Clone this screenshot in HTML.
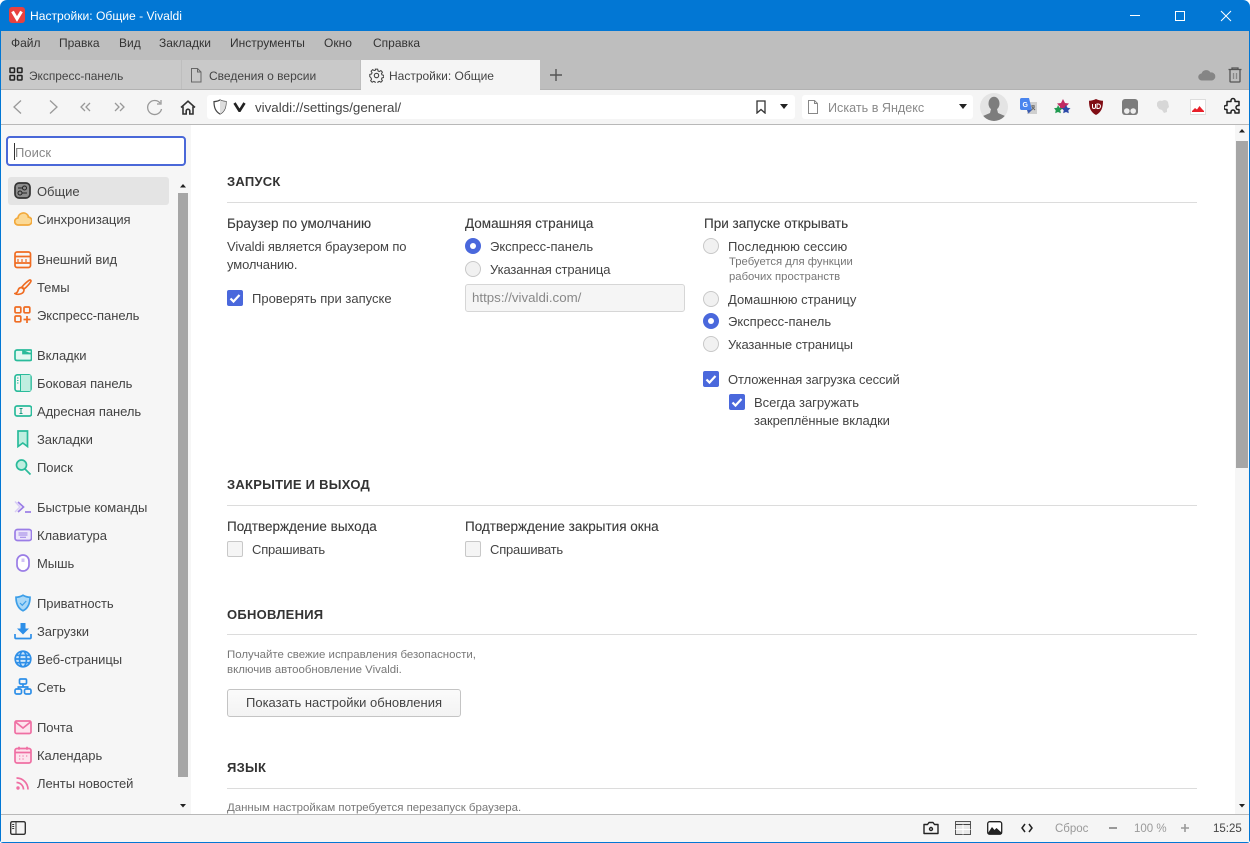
<!DOCTYPE html>
<html lang="ru"><head><meta charset="utf-8"><title>Настройки: Общие - Vivaldi</title>
<style>
html,body{margin:0;padding:0;width:1250px;height:843px;overflow:hidden;background:#fff}
body{position:relative;font-family:"Liberation Sans","Noto Sans CJK SC",sans-serif;font-size:13px;color:#3a3a3a}
div,span,svg{position:absolute}
.t{white-space:nowrap;line-height:20px;height:20px}
.m{color:#333;font-size:12px;top:33px}
.n{left:37px;color:#444;font-size:13px;letter-spacing:-.05px}
.h{left:227px;font-weight:bold;font-size:13px;color:#333;letter-spacing:.25px}
.b{font-weight:normal;color:#3a3a3a;font-size:13.500px;-webkit-text-stroke:.1px #3a3a3a}
.x{letter-spacing:-.1px}
.s{color:#777;font-size:11.300px}
.w{font-size:11.450px}
.l{height:1px;left:227px;width:970px;background:#dcdcdc}
.r{width:16px;height:16px;border-radius:50%;background:#f1f1f1;border:1px solid #c8c8c8;box-sizing:border-box}
.r.on{background:#4a68dc;border:0}
.r.on:after{content:"";position:absolute;left:5px;top:5px;width:6px;height:6px;border-radius:50%;background:#fff}
.c{width:16px;height:16px;border-radius:2px;background:#4a68dc}
.c svg{left:0;top:0}
.u{width:16px;height:16px;border-radius:2px;background:#f5f5f5;border:1px solid #c8c8c8;box-sizing:border-box}
.i{width:18px;height:18px;left:14px;fill:none;stroke-width:1.700}
</style></head><body>

<!-- window frame -->
<div style="left:0;top:0;width:1250px;height:843px;background:#0277d4;border-radius:7px 7px 3px 3px"></div>
<!-- menu bar + tab strip -->
<div style="left:1px;top:31px;width:1248px;height:59px;background:#bebebe"></div>
<!-- title -->
<svg style="left:9px;top:7px" width="16" height="16" viewBox="0 0 16 16"><rect width="16" height="16" rx="3" fill="#e8413f"/><path d="M3.500 4.500 8 12l4.500-7.500" fill="none" stroke="#fff" stroke-width="3"/></svg>
<span class="t" style="left:30px;top:6px;color:#fff;font-size:12.100px">Настройки: Общие - Vivaldi</span>
<svg style="left:1125px;top:8px" width="120" height="16" fill="none" stroke="#fff" stroke-width="1"><path d="M5 7.500H15M50.500 3.500h9v9h-9zM96 3l10 10M106 3 96 13"/></svg>

<span class="t m" style="left:11px">Файл</span>
<span class="t m" style="left:59px">Правка</span>
<span class="t m" style="left:119px">Вид</span>
<span class="t m" style="left:159px">Закладки</span>
<span class="t m" style="left:230px">Инструменты</span>
<span class="t m" style="left:324px">Окно</span>
<span class="t m" style="left:373px">Справка</span>

<!-- tabs -->
<div style="left:1px;top:60px;width:180px;height:29px;background:#c9c9c9"></div>
<div style="left:182px;top:60px;width:178px;height:29px;background:#c9c9c9"></div>
<div style="left:361px;top:60px;width:179px;height:30px;background:#f5f5f5"></div>
<div style="left:1px;top:89px;width:1248px;height:1px;background:#b2b2b2"></div>
<div style="left:361px;top:89px;width:179px;height:1px;background:#f5f5f5"></div>
<svg style="left:9px;top:67px" width="14" height="14" fill="none" stroke="#222" stroke-width="1.500"><rect x="1" y="1" width="4.500" height="4.500" rx=".6"/><rect x="8.500" y="1" width="4.500" height="4.500" rx=".6"/><rect x="1" y="8.500" width="4.500" height="4.500" rx=".6"/><rect x="8.500" y="8.500" width="4.500" height="4.500" rx=".6"/></svg>
<span class="t" style="left:29px;top:66px;font-size:11.900px;color:#444">Экспресс-панель</span>
<svg style="left:190px;top:68px" width="12" height="15" fill="none" stroke="#666"><path d="M1.500.5h6l3.500 3.500v10h-9.500zM7.500.5V4H11"/></svg>
<span class="t" style="left:209px;top:66px;font-size:12px;color:#444">Сведения о версии</span>
<svg style="left:369px;top:68px" width="15" height="15" viewBox="0 0 15 15" fill="none" stroke="#444" stroke-width="1.100"><circle cx="7.500" cy="7.500" r="2.200"/><path d="M6.300 1h2.400l.4 1.900 1.300.6 1.700-1 1.600 1.700-1 1.600.6 1.300 1.800.4v2.300l-1.800.4-.6 1.300 1 1.600-1.600 1.700-1.700-1-1.300.6-.4 1.800H6.300l-.4-1.800-1.300-.6-1.700 1-1.600-1.700 1-1.600-.6-1.300L.4 8.800V6.500l1.800-.4.6-1.300-1-1.600 1.600-1.700 1.700 1 1.300-.6z" transform="translate(.4 .2) scale(.95)"/></svg>
<span class="t" style="left:389px;top:66px;font-size:12px;color:#444">Настройки: Общие</span>
<svg style="left:549px;top:68px" width="14" height="14" stroke="#555" stroke-width="1.400"><path d="M7 1v12M1 7h12"/></svg>
<svg style="left:1198px;top:69px" width="18" height="12" viewBox="0 0 18 12"><path d="M4 11.500a3.500 3.500 0 0 1-.5-7A5 5 0 0 1 12.500 3.500 4 4 0 0 1 14 11.500z" fill="#858585"/></svg>
<svg style="left:1228px;top:67px" width="14" height="16" viewBox="0 0 14 16" fill="none" stroke="#555" stroke-width="1.300"><path d="M.5 2.500h13M4 2.500V1h6v1.500M2 3v11.300c0 .5.300.7.700.7h8.600c.4 0 .7-.2.700-.7V3"/><path d="M5.500 6v6M8.500 6v6" stroke="#888"/></svg>

<!-- toolbar -->
<div style="left:1px;top:90px;width:1248px;height:34px;background:#f5f5f5"></div>
<div style="left:1px;top:124px;width:1248px;height:1px;background:#b8b8b8"></div>
<svg style="left:10px;top:97px" width="170" height="20" fill="none" stroke="#999" stroke-width="1.300"><path d="M11 3.500 4 10l7 6.500M40 3.500l7 6.500-7 6.500"/><path d="M75 6l-4 4 4 4M80 6l-4 4 4 4M105 6l4 4-4 4M110 6l4 4-4 4"/><path d="M150 6a7 7 0 1 0 1.500 6M151 3v4h-4"/></svg>
<svg style="left:180px;top:100px" width="16" height="15" viewBox="0 0 16 15" fill="none" stroke="#333" stroke-width="1.600"><path d="M1 7.500 8 1.200l7 6.300M3 6.500v7.500h3.200v-3a1.800 1.800 0 0 1 3.600 0v3H13V6.500"/></svg>
<div style="left:207px;top:95px;width:588px;height:24px;background:#fff;border-radius:3px"></div>
<svg style="left:213px;top:99px" width="14" height="16" fill="none" stroke="#444" stroke-width="1.200"><path d="M7 1c2 1.200 4 1.600 6 1.600 0 6-1.500 9.800-6 12.400C2.500 12.400 1 8.600 1 2.600 3 2.600 5 2.200 7 1z"/><path d="M7 1c2 1.200 4 1.600 6 1.600 0 6-1.500 9.800-6 12.400z" fill="#ddd" stroke="none"/></svg>
<svg style="left:233px;top:102px" width="13" height="10"><path d="M1.500 1 6.500 9l5-8" fill="none" stroke="#222" stroke-width="2.600"/></svg>
<span class="t" style="left:255px;top:98px;color:#444;font-size:13.350px">vivaldi://settings/general/</span>
<svg style="left:756px;top:100px" width="10" height="14" fill="none" stroke="#333" stroke-width="1.300"><path d="M1 1h8v12L5 9.500 1 13z"/></svg>
<svg style="left:779px;top:104px" width="10" height="6"><path d="M1 0h8L5 5z" fill="#222"/></svg>
<div style="left:802px;top:95px;width:171px;height:24px;background:#fff;border-radius:3px"></div>
<svg style="left:807px;top:100px" width="12" height="15" fill="none" stroke="#888"><path d="M1.500.5h6l3 3v10h-9zM7.500.5v3h3"/></svg>
<span class="t" style="left:828px;top:98px;color:#8a8a8a;font-size:12.600px">Искать в Яндекс</span>
<svg style="left:958px;top:104px" width="10" height="6"><path d="M1 0h8L5 5z" fill="#222"/></svg>
<!-- avatar -->
<div style="left:980px;top:93px;width:28px;height:28px;border-radius:50%;background:#e4e4e4;overflow:hidden">
<svg style="left:0;top:0" width="28" height="28" viewBox="0 0 28 28"><ellipse cx="14" cy="10.500" rx="5.500" ry="6.800" fill="#7d7d7d"/><path d="M11 16h6l1 4 7 3v5H3v-5l7-3z" fill="#7d7d7d"/></svg></div>
<!-- extensions -->
<svg style="left:1020px;top:98px" width="17" height="18" viewBox="0 0 17 18"><rect x="7" y="4" width="10" height="12" fill="#cfcfcf"/><path d="M0 1.500C0 .7.700 0 1.500 0H9l3 12H1.500C.7 12 0 11.300 0 10.500z" fill="#4a85ee"/><path d="M7 12h5l-3.500 3.500z" fill="#3a5bb0"/><text x="2.500" y="9" font-size="7" font-weight="bold" fill="#fff" font-family="Liberation Sans">G</text><path d="M11 8h4M13 7v1M11.500 12l3-3M12 9l3 3" stroke="#666" fill="none"/></svg>
<svg style="left:1054px;top:99px" width="17" height="17" viewBox="0 0 17 17"><path d="M9 0l2 4 4 .5-3 3 .7 4L9 9.500 5.300 11.500 6 7.500 3 4.500 7 4z" fill="#c02a62"/><path d="M4 6l1.500 2.800 3 .4-2.200 2.100.5 3L4 13l-2.800 1.300.5-3L0 9.200l3-.4z" fill="#1f9a50"/><path d="M12 6l1.500 2.800 3 .4-2.200 2.100.5 3L12 13l-2.800 1.300.5-3L7.500 9.200l3-.4z" fill="#2c4aa8"/></svg>
<svg style="left:1089px;top:99px" width="14" height="16" viewBox="0 0 14 16"><path d="M7 0c2.300 1.200 4.500 1.700 7 1.700 0 7-1.500 11.300-7 14.300C1.500 13 0 8.700 0 1.700 2.500 1.700 4.700 1.200 7 0z" fill="#800d14"/><path d="M3.500 5v3a1.500 1.500 0 0 0 3 0V5M8 5v4.500h1.200a2.200 2.200 0 0 0 0-4.500z" fill="none" stroke="#fff" stroke-width="1"/></svg>
<svg style="left:1122px;top:99px" width="16" height="16" viewBox="0 0 16 16"><rect width="16" height="16" rx="3" fill="#7c7c7c"/><circle cx="4.800" cy="12" r="2.800" fill="#eee"/><circle cx="11.200" cy="12" r="2.800" fill="#eee"/></svg>
<svg style="left:1156px;top:99px" width="15" height="15" viewBox="0 0 15 15"><path d="M1 4c1-2 3-3 5-2 2-1.500 5-1 6 1l1 5-2 2 0 3-3 1-2-3-3-1-2-3z" fill="#d7d7d7"/></svg>
<svg style="left:1190px;top:99px" width="16" height="16" viewBox="0 0 16 16"><rect x=".5" y=".5" width="15" height="15" fill="#fff" stroke="#ddd"/><path d="M2 12l3-3 2 1.500L9.500 7l2.500 3 2 2z" fill="#e8202a"/><rect x="2" y="12" width="12" height="1" fill="#e8202a"/></svg>
<svg style="left:1224px;top:97px" width="18" height="18" viewBox="0 0 18 18" fill="none" stroke="#222" stroke-width="1.500"><path d="M7 3.500a2 2 0 0 1 4 0l0 1h4v4h-1a2 2 0 0 0 0 4h1V16h-4v-1a2 2 0 0 0-4 0v1H3v-3.500H2a2 2 0 0 1 0-4h1V4.500h4z" stroke-linejoin="round"/></svg>

<!-- body areas -->
<div style="left:1px;top:125px;width:190px;height:689px;background:#f6f6f6"></div>
<div style="left:191px;top:125px;width:1044px;height:689px;background:#fff"></div>
<div style="left:1235px;top:125px;width:14px;height:689px;background:#f6f6f6"></div>

<!-- sidebar search -->
<div style="left:6px;top:136px;width:180px;height:30px;box-sizing:border-box;border:2px solid #4a68d8;border-radius:4px;background:#fff"></div>
<div style="left:14px;top:143px;width:1px;height:17px;background:#333"></div>
<span class="t" style="left:15px;top:143px;color:#888;font-size:13px">Поиск</span>

<!-- sidebar scrollbar -->
<div style="left:178px;top:193px;width:10px;height:584px;background:#a6a6a6"></div>
<svg style="left:178px;top:183px" width="10" height="6"><path d="M2 4.500h6L5 1z" fill="#222"/></svg>
<svg style="left:178px;top:803px" width="10" height="6"><path d="M2 1h6L5 4.500z" fill="#222"/></svg>

<!-- selected -->
<div style="left:8px;top:177px;width:161px;height:28px;background:#e4e4e4;border-radius:3px"></div>

<!-- icons -->
<svg class="i" style="top:182px" viewBox="0 0 18 18"><rect x="1" y="1" width="15" height="15" rx="4" fill="#8d8d8d" stroke="#333"/><circle cx="10.500" cy="6" r="2" stroke="#222" stroke-width="1"/><circle cx="6" cy="11" r="2" stroke="#222" stroke-width="1"/><path d="M4 6h4.500M8 11h5" stroke="#222" stroke-width="1"/></svg>
<svg class="i" style="top:210px" viewBox="0 0 18 18"><path d="M4.500 15a3.500 3.500 0 0 1-.6-7A5.500 5.500 0 0 1 14 5.500c.2.700.3 1 .3 1.500A4 4 0 0 1 13.500 15z" fill="#fbd996" stroke="#f2a93c"/></svg>
<svg class="i" style="top:251px" viewBox="0 0 18 18" stroke="#ef6c22"><rect x="1" y="1" width="15.500" height="15.500" rx="2"/><path d="M1 5.500h15.500M1 12h15.500"/><path d="M4 8v3M8 8v3M12 8v3" stroke-width="1.200"/></svg>
<svg class="i" style="top:278px" viewBox="0 0 18 18" stroke="#ef6c22"><path d="M16 2c-1 0-6 4-8 7l2 2c3-2 7-7 7-8 0-.6-.5-1-1-1z"/><path d="M7.500 9.500c-2 0-3 1-3.500 3-.3 1.500-1.500 2.500-3 3 2 1.300 5.500 1 7.500-.5 1.500-1.300 1.800-3.300 1-4z"/></svg>
<svg class="i" style="top:306px" viewBox="0 0 18 18" stroke="#ef6c22" stroke-width="1.900"><rect x="1" y="1" width="5.800" height="5.800" rx="1.200"/><rect x="10" y="1" width="5.800" height="5.800" rx="1.200"/><rect x="1" y="10" width="5.800" height="5.800" rx="1.200"/><path d="M13 10v7M9.500 13.500h7"/></svg>
<svg class="i" style="top:346px" viewBox="0 0 18 18" stroke="#2abb9b"><path d="M1 6c0-1 .7-2 2-2h13.500c.7 0 1 .4 1 1v8c0 1-.7 1.500-1.500 1.500H3c-1.200 0-2-.7-2-2z" fill="#e3f8f2"/><path d="M9 4v3.500h8.500" fill="#2abb9b"/></svg>
<svg class="i" style="top:374px" viewBox="0 0 18 18" stroke="#2abb9b"><rect x="1" y=".8" width="16" height="16.400" rx="2.500"/><rect x="6.500" y="1" width="10" height="16" fill="#bfeee0" stroke="none"/><path d="M6.500 1v16M3 4h1.500M3 6.500h1.500M3 9h1.500" stroke-width="1"/></svg>
<svg class="i" style="top:402px" viewBox="0 0 18 18" stroke="#2abb9b"><rect x="1" y="4" width="16.500" height="10" rx="2"/><path d="M5.500 6.500h3M5.500 11.500h3M7 6.500v5" stroke-width="1" stroke="#1d9a80"/></svg>
<svg class="i" style="top:430px" viewBox="0 0 18 18" stroke="#2abb9b"><path d="M4 1h9.500v15.500L8.800 13 4 16.500z" fill="#bfeee0"/></svg>
<svg class="i" style="top:458px" viewBox="0 0 18 18" stroke="#2abb9b" stroke-width="1.700"><circle cx="7.500" cy="7" r="5" fill="#bfeee0"/><path d="M11 11l5.500 5.500"/></svg>
<svg class="i" style="top:498px" viewBox="0 0 18 18" stroke="#9a7de6"><path d="M1 3.500 6 9 1 14" stroke="#d8ccf6" stroke-width="1.500"/><path d="M4 4l5.500 5L4 14"/><path d="M11 14h6"/></svg>
<svg class="i" style="top:526px" viewBox="0 0 18 18" stroke="#9a7de6"><rect x="1" y="3.500" width="16.500" height="11" rx="2.500" fill="#ece6fb"/><path d="M4.500 7h9M4.500 9h9M6 11.300h6" stroke-width="1"/></svg>
<svg class="i" style="top:554px" viewBox="0 0 18 18" stroke="#9a7de6"><rect x="3" y="1" width="12" height="16" rx="6" fill="#fff"/><path d="M9 4.500v3.500" stroke="#d0c2f4" stroke-width="3"/></svg>
<svg class="i" style="top:594px" viewBox="0 0 18 18" stroke="#3c9ee8"><path d="M9 1.200c2.500 1.400 5 2 7 2 0 6.700-2 11-7 13.600C4 14.200 2 9.900 2 3.200c2 0 4.500-.6 7-2z" fill="#a9d8f7"/><path d="M6 9l2.300 2.300L12.200 7" stroke-width="1.200"/></svg>
<svg class="i" style="top:622px" viewBox="0 0 18 18" stroke="#2e8fe8" stroke-width="1.600"><path d="M6.500 1h5v5.500H15L9 12.500 3 6.500h3.500z" fill="#2e8fe8" stroke="none"/><path d="M1 12v3.500c0 .6.400 1 1 1h14c.6 0 1-.4 1-1V12"/></svg>
<svg class="i" style="top:650px" viewBox="0 0 18 18" stroke="#2e8fe8" stroke-width="1.200"><circle cx="9" cy="9" r="7.800" fill="#cfe7fb"/><ellipse cx="9" cy="9" rx="3.500" ry="7.800"/><path d="M1.200 9h15.600M2.300 5.300h13.400M2.300 12.700h13.400"/></svg>
<svg class="i" style="top:678px" viewBox="0 0 18 18" stroke="#2e8fe8" stroke-width="1.400"><rect x="5.500" y="1" width="7" height="5" rx="1.200"/><rect x="1" y="11" width="6.500" height="5" rx="1.500"/><rect x="10.500" y="11" width="6.500" height="5" rx="1.500"/><path d="M9 6v3M4.300 11V9h9.400v2"/></svg>
<svg class="i" style="top:718px" viewBox="0 0 18 18" stroke="#ef6fa3" stroke-width="1.500"><rect x="1" y="3" width="16" height="12.500" rx="1.500" fill="#fde4ee"/><path d="M1.500 4l7.500 6 7.500-6"/></svg>
<svg class="i" style="top:746px" viewBox="0 0 18 18" stroke="#ef6fa3" stroke-width="1.500"><rect x="1" y="2.500" width="16" height="14.500" rx="2" fill="#fde4ee"/><path d="M1 6.500h16M5 .8v3M13 .8v3"/><path d="M5 10h1.300M8.400 10h1.300M12 10h1.300M5 13h1.300M8.400 13h1.300" stroke-width="1"/></svg>
<svg class="i" style="top:774px" viewBox="0 0 18 18" stroke="#ef6fa3" stroke-width="1.700"><circle cx="4" cy="14" r="1.700" fill="#ef6fa3" stroke="none"/><path d="M2.500 8.500a7 7 0 0 1 7 7M2.500 4a11.500 11.500 0 0 1 11.500 11.500" /></svg>

<!-- nav labels -->
<span class="t n" style="top:182px">Общие</span>
<span class="t n" style="top:210px">Синхронизация</span>
<span class="t n" style="top:250px">Внешний вид</span>
<span class="t n" style="top:278px">Темы</span>
<span class="t n" style="top:306px">Экспресс-панель</span>
<span class="t n" style="top:346px">Вкладки</span>
<span class="t n" style="top:374px">Боковая панель</span>
<span class="t n" style="top:402px">Адресная панель</span>
<span class="t n" style="top:430px">Закладки</span>
<span class="t n" style="top:458px">Поиск</span>
<span class="t n" style="top:498px">Быстрые команды</span>
<span class="t n" style="top:526px">Клавиатура</span>
<span class="t n" style="top:554px">Мышь</span>
<span class="t n" style="top:594px">Приватность</span>
<span class="t n" style="top:622px">Загрузки</span>
<span class="t n" style="top:650px">Веб-страницы</span>
<span class="t n" style="top:678px">Сеть</span>
<span class="t n" style="top:718px">Почта</span>
<span class="t n" style="top:746px">Календарь</span>
<span class="t n" style="top:774px">Ленты новостей</span>

<!-- content scrollbar -->
<svg style="left:1237px;top:128px" width="10" height="6"><path d="M2 4.500h6L5 1z" fill="#222"/></svg>
<div style="left:1236px;top:141px;width:12px;height:327px;background:#a6a6a6"></div>
<svg style="left:1237px;top:803px" width="10" height="6"><path d="M2 1h6L5 4.500z" fill="#222"/></svg>

<!-- section: запуск -->
<span class="t h" style="top:172px">ЗАПУСК</span>
<div class="l" style="top:202px"></div>
<span class="t b" style="left:227px;top:214px">Браузер по умолчанию</span>
<span class="t x" style="left:227px;top:237px;color:#444">Vivaldi является браузером по</span>
<span class="t x" style="left:227px;top:255px;color:#444">умолчанию.</span>
<div class="c" style="left:227px;top:290px"><svg width="16" height="16" fill="none" stroke="#fff" stroke-width="2.200"><path d="M3.500 8.500 6.500 11.500 12.500 5"/></svg></div>
<span class="t" style="left:252px;top:289px;color:#444">Проверять при запуске</span>

<span class="t b" style="left:465px;top:214px">Домашняя страница</span>
<div class="r on" style="left:465px;top:238px"></div>
<span class="t" style="left:490px;top:237px;color:#444">Экспресс-панель</span>
<div class="r" style="left:465px;top:261px"></div>
<span class="t x" style="left:490px;top:260px;color:#444">Указанная страница</span>
<div style="left:465px;top:284px;width:220px;height:28px;box-sizing:border-box;border:1px solid #d6d6d6;border-radius:3px;background:#f5f5f5"></div>
<span class="t" style="left:472px;top:288px;color:#888;font-size:13.300px">https://vivaldi.com/</span>

<span class="t b" style="left:704px;top:214px">При запуске открывать</span>
<div class="r" style="left:703px;top:238px"></div>
<span class="t" style="left:728px;top:237px;color:#444">Последнюю сессию</span>
<span class="t s" style="left:729px;top:252px">Требуется для функции</span>
<span class="t s" style="left:729px;top:267px">рабочих пространств</span>
<div class="r" style="left:703px;top:291px"></div>
<span class="t" style="left:728px;top:290px;color:#444">Домашнюю страницу</span>
<div class="r on" style="left:703px;top:313px"></div>
<span class="t" style="left:728px;top:312px;color:#444">Экспресс-панель</span>
<div class="r" style="left:703px;top:336px"></div>
<span class="t x" style="left:728px;top:335px;color:#444">Указанные страницы</span>
<div class="c" style="left:703px;top:371px"><svg width="16" height="16" fill="none" stroke="#fff" stroke-width="2.200"><path d="M3.500 8.500 6.500 11.500 12.500 5"/></svg></div>
<span class="t x" style="left:728px;top:370px;color:#444">Отложенная загрузка сессий</span>
<div class="c" style="left:729px;top:394px"><svg width="16" height="16" fill="none" stroke="#fff" stroke-width="2.200"><path d="M3.500 8.500 6.500 11.500 12.500 5"/></svg></div>
<span class="t" style="left:754px;top:393px;color:#444">Всегда загружать</span>
<span class="t x" style="left:754px;top:411px;color:#444">закреплённые вкладки</span>

<!-- section: закрытие -->
<span class="t h" style="top:475px">ЗАКРЫТИЕ И ВЫХОД</span>
<div class="l" style="top:505px"></div>
<span class="t b" style="left:227px;top:517px">Подтверждение выхода</span>
<div class="u" style="left:227px;top:541px"></div>
<span class="t x" style="left:252px;top:540px;color:#444;letter-spacing:-.2px">Спрашивать</span>
<span class="t b" style="left:465px;top:517px">Подтверждение закрытия окна</span>
<div class="u" style="left:465px;top:541px"></div>
<span class="t x" style="left:490px;top:540px;color:#444;letter-spacing:-.2px">Спрашивать</span>

<!-- section: обновления -->
<span class="t h" style="top:605px">ОБНОВЛЕНИЯ</span>
<div class="l" style="top:634px"></div>
<span class="t s w" style="left:227px;top:645px">Получайте свежие исправления безопасности,</span>
<span class="t s w" style="left:227px;top:660px">включив автообновление Vivaldi.</span>
<div style="left:227px;top:689px;width:234px;height:28px;box-sizing:border-box;border:1px solid #c4c4c4;border-radius:3px;background:linear-gradient(#fbfbfb,#f3f3f3)"></div>
<span class="t" style="left:246px;top:693px;color:#444">Показать настройки обновления</span>

<!-- section: язык -->
<span class="t h" style="top:758px">ЯЗЫК</span>
<div class="l" style="top:788px"></div>
<span class="t s w" style="left:227px;top:798px">Данным настройкам потребуется перезапуск браузера.</span>

<!-- status bar -->
<div style="left:1px;top:814px;width:1248px;height:28px;background:#f5f5f5;border-top:1px solid #b8b8b8;box-sizing:border-box"></div>
<svg style="left:10px;top:821px" width="16" height="14" fill="none" stroke="#333" stroke-width="1.400"><rect x=".7" y=".7" width="14.600" height="12.600" rx="1.500"/><path d="M6 .7v12.600M2.200 3.500h2M2.200 5.500h2M2.200 7.500h2" stroke-width="1"/></svg>
<svg style="left:923px;top:821px" width="16" height="14" fill="none" stroke="#222" stroke-width="1.400"><path d="M1 3.500h3.500L6 1.500h4l1.500 2H15v9H1z" stroke-linejoin="round"/><circle cx="8" cy="8" r="1.500"/></svg>
<svg style="left:955px;top:821px" width="16" height="14" fill="none" stroke="#555"><rect x=".5" y=".5" width="15" height="13" fill="#e8e8e8"/><path d="M.5 3.500h15" stroke="#444"/><path d="M8 3.500v10M.5 8.500h15" stroke="#fff"/></svg>
<svg style="left:987px;top:821px" width="16" height="14"><rect x=".7" y=".7" width="14" height="12.500" rx="2" fill="#fff" stroke="#222" stroke-width="1.300"/><path d="M1 12 5 6l2.500 3 2-2L15 12v1H1z" fill="#222"/></svg>
<svg style="left:1021px;top:823px" width="12" height="10" fill="none" stroke="#222" stroke-width="1.500"><path d="M4 1 1 5l3 4M8 1l3 4-3 4"/></svg>
<span class="t" style="left:1055px;top:819px;color:#9a9a9a;font-size:11.500px">Сброс</span>
<div style="left:1109px;top:827px;width:8px;height:2px;background:#999"></div>
<span class="t" style="left:1134px;top:819px;color:#9a9a9a;font-size:11.500px">100 %</span>
<svg style="left:1180px;top:823px" width="10" height="10" stroke="#999" stroke-width="1.600"><path d="M5 1v8M1 5h8"/></svg>
<span class="t" style="left:1213px;top:819px;color:#444;font-size:11.500px">15:25</span>
</body></html>
